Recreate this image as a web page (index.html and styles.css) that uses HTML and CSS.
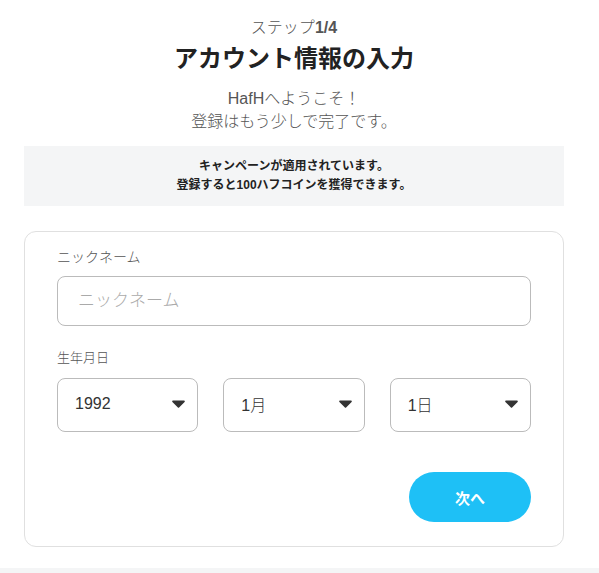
FILE: index.html
```html
<!DOCTYPE html>
<html lang="ja">
<head>
    <meta charset="UTF-8">
    <meta name="viewport" content="width=device-width, initial-scale=1.0">
    <title>アカウント情報の入力</title>
    <link rel="stylesheet" href="styles.css">
</head>
<body>
    <div class="page">
        <p class="step">ステップ<b>1/4</b></p>
        <h1 class="title">アカウント情報の入力</h1>
        <p class="welcome">HafHへようこそ！<br>登録はもう少しで完了です。</p>

        <div class="campaign">
            キャンペーンが適用されています。<br>
            登録すると100ハフコインを獲得できます。
        </div>

        <form class="card">
            <label class="label" for="nickname">ニックネーム</label>
            <input class="input" id="nickname" type="text" placeholder="ニックネーム">

            <div class="label label-birth">生年月日</div>
            <div class="birth">
                <div class="select">
                    <span>1992</span>
                    <svg class="caret" viewBox="8 188 304 172"><path d="M31.3 192h257.3c17.8 0 26.7 21.5 14.1 34.1L174.1 354.8c-7.8 7.8-20.5 7.8-28.3 0L17.2 226.1C4.6 213.5 13.5 192 31.3 192z"/></svg>
                </div>
                <div class="select">
                    <span>1月</span>
                    <svg class="caret" viewBox="8 188 304 172"><path d="M31.3 192h257.3c17.8 0 26.7 21.5 14.1 34.1L174.1 354.8c-7.8 7.8-20.5 7.8-28.3 0L17.2 226.1C4.6 213.5 13.5 192 31.3 192z"/></svg>
                </div>
                <div class="select">
                    <span>1日</span>
                    <svg class="caret" viewBox="8 188 304 172"><path d="M31.3 192h257.3c17.8 0 26.7 21.5 14.1 34.1L174.1 354.8c-7.8 7.8-20.5 7.8-28.3 0L17.2 226.1C4.6 213.5 13.5 192 31.3 192z"/></svg>
                </div>
            </div>

            <div class="actions">
                <button class="next" type="button">次へ</button>
            </div>
        </form>
    </div>
    <div class="footer"></div>
</body>
</html>
```

FILE: styles.css
```css
body {
    margin: 0;
    background: #fff;
    font-family: "Liberation Sans", "Noto Sans CJK JP", sans-serif;
    color: #333;
}

.page {
    width: 540px;
    margin: 0 0 0 24px;
    text-align: center;
}

.step {
    margin: 17px 0 0;
    font-size: 16px;
    line-height: 22px;
    font-weight: 300;
    color: #555;
}

.step b {
    font-weight: bold;
}

.title {
    margin: 3px 0 0;
    font-size: 24px;
    line-height: 34px;
    font-weight: bold;
    color: #222;
}

.welcome {
    margin: 11px 0 0;
    font-size: 16px;
    line-height: 23px;
    font-weight: 300;
    color: #555;
}

.campaign {
    margin-top: 13px;
    padding: 11px 0;
    background: #f4f5f6;
    font-size: 12px;
    line-height: 19px;
    font-weight: bold;
    color: #222;
}

.card {
    margin-top: 25px;
    padding: 15px 32px 24px;
    border: 1px solid #e0e0e0;
    border-radius: 12px;
    text-align: left;
    display: flex;
    flex-direction: column;
}

.label {
    font-size: 14px;
    line-height: 20px;
    font-weight: 300;
    color: #555;
}

.label-birth {
    margin-top: 23px;
    font-size: 13px;
    line-height: 18px;
}

.input {
    margin-top: 9px;
    height: 50px;
    box-sizing: border-box;
    padding: 0 20px;
    border: 1px solid #bbb;
    border-radius: 8px;
    font-family: inherit;
    font-size: 17px;
    font-weight: 300;
    color: #333;
    outline: none;
}

.input::placeholder {
    color: #aaa;
}

.birth {
    margin-top: 11px;
    display: grid;
    grid-template-columns: repeat(3, 1fr);
    gap: 25px;
}

.select {
    height: 54px;
    box-sizing: border-box;
    padding: 0 12px 2px 17px;
    border: 1px solid #bbb;
    border-radius: 8px;
    display: flex;
    align-items: center;
    justify-content: space-between;
    font-size: 16px;
    font-weight: 300;
    color: #333;
}

.caret {
    width: 13px;
    height: 8px;
    fill: #333;
}

.actions {
    margin-top: 40px;
    display: flex;
    justify-content: flex-end;
}

.next {
    width: 122px;
    height: 50px;
    border: none;
    border-radius: 25px;
    background: #1ec0f6;
    color: #fff;
    font-family: inherit;
    font-size: 15px;
    font-weight: bold;
    cursor: pointer;
}

.footer {
    margin-top: 21px;
    height: 5px;
    background: #f4f5f6;
}
```
